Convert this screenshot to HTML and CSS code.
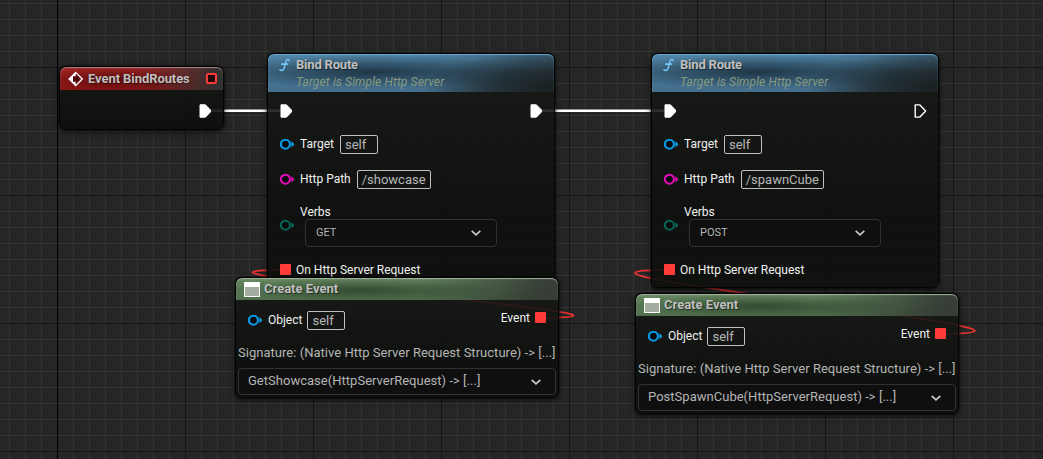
FILE: index.html
```
<!DOCTYPE html>
<html lang="en">
<head>
<meta charset="utf-8">
<title>Blueprint Graph</title>
<link rel="stylesheet" href="styles.css">
</head>
<body>
<svg class="defs" width="0" height="0" aria-hidden="true">
  <symbol id="exec" viewBox="0 0 13 14"><path d="M1 .8h5.4l5.1 5.3v1.8l-5.1 5.3H1z" fill="currentColor" stroke="currentColor" stroke-width="1" stroke-linejoin="round"/></symbol>
  <symbol id="exec-open" viewBox="0 0 13 14"><path d="M1.2.9h4.7L11.6 7l-5.7 6.1H1.2z" fill="none" stroke="currentColor" stroke-width="1.4" stroke-linejoin="round"/></symbol>
  <symbol id="pin" viewBox="0 0 15 12"><circle cx="5.4" cy="6.2" r="4.5" fill="#080b0c" stroke="currentColor" stroke-width="2.1"/><path d="M11.3 3 14.5 6.2l-3.2 3.2z" fill="currentColor"/></symbol>
  <symbol id="chevron" viewBox="0 0 12 8"><path d="M1.7 1.8 6 5.9l4.3-4.1" fill="none" stroke="currentColor" stroke-width="1.7"/></symbol>
  <symbol id="function" viewBox="0 0 12 14"><path d="M10.2 2.6C9.8 1.1 7.6 1 7 3.2L5 10.6C4.4 12.6 2 12.9 1 11.8M2.6 6.1h6.2" fill="none" stroke="currentColor" stroke-width="1.6" stroke-linecap="round"/></symbol>
  <symbol id="event" viewBox="0 0 16 16"><path d="M7.7 1.4 14.3 8l-6.6 6.6L1.1 8z" fill="none" stroke="#fff" stroke-width="1.3"/><path d="M7.7 1 .7 8l7 7v-4.2H5V5.2h2.7z" fill="#fff"/><path d="M5 5.8h3V3.8L12 8l-4 4.2v-2H5z" fill="#4d0b0b"/></symbol>
  <symbol id="window" viewBox="0 0 16 15"><rect width="16" height="15" fill="#fff"/><rect x="1" y="5" width="14" height="9" fill="#a3ada0"/></symbol>
</svg>

<main class="graph">
  <svg class="wires" width="1043" height="459">
    <path class="wire-exec" d="M209 110.8H281M540 110.8H665"/>
    <path class="wire-event" d="M541 317.8C718 317.8 108 270 285 270"/>
    <path class="wire-event" d="M941 333.8C1126 333.8 484 270 669 270"/>
  </svg>

  <section class="node node-entry">
    <header class="head head-red">
      <svg class="icon-event"><use href="#event"/></svg>
      <h2 class="title title-entry">Event BindRoutes</h2>
      <i class="delegate-open"></i>
    </header>
    <div class="entry-body"><svg class="exec"><use href="#exec"/></svg></div>
  </section>

  <section class="node node-bind bind-a">
    <header class="head head-blue">
      <svg class="icon-fn"><use href="#function"/></svg>
      <div><h2 class="title title-bind">Bind Route</h2><p class="subtitle">Target is Simple Http Server</p></div>
    </header>
    <div class="bind-body">
      <div class="row row-exec"><svg class="exec"><use href="#exec"/></svg><svg class="exec"><use href="#exec"/></svg></div>
      <div class="row"><svg class="pin blue"><use href="#pin"/></svg><span class="label">Target</span><span class="field self">self</span></div>
      <div class="row row-path"><svg class="pin pink"><use href="#pin"/></svg><span class="label">Http Path</span><span class="field">/showcase</span></div>
      <div class="row row-verbs">
        <svg class="pin teal"><use href="#pin"/></svg>
        <div class="verbs"><span class="label">Verbs</span><div class="select"><span>GET</span><svg class="chevron"><use href="#chevron"/></svg></div></div>
      </div>
      <div class="row row-delegate"><i class="delegate"></i><span class="label">On Http Server Request</span></div>
    </div>
  </section>

  <section class="node node-bind bind-b">
    <header class="head head-blue">
      <svg class="icon-fn"><use href="#function"/></svg>
      <div><h2 class="title title-bind">Bind Route</h2><p class="subtitle">Target is Simple Http Server</p></div>
    </header>
    <div class="bind-body">
      <div class="row row-exec"><svg class="exec"><use href="#exec"/></svg><svg class="exec"><use href="#exec-open"/></svg></div>
      <div class="row"><svg class="pin blue"><use href="#pin"/></svg><span class="label">Target</span><span class="field self">self</span></div>
      <div class="row row-path"><svg class="pin pink"><use href="#pin"/></svg><span class="label">Http Path</span><span class="field">/spawnCube</span></div>
      <div class="row row-verbs">
        <svg class="pin teal"><use href="#pin"/></svg>
        <div class="verbs"><span class="label">Verbs</span><div class="select"><span>POST</span><svg class="chevron"><use href="#chevron"/></svg></div></div>
      </div>
      <div class="row row-delegate"><i class="delegate"></i><span class="label">On Http Server Request</span></div>
    </div>
  </section>

  <section class="node node-create create-a">
    <header class="head head-green"><svg class="icon-window"><use href="#window"/></svg><h2 class="title">Create Event</h2></header>
    <div class="create-pins">
      <div class="row"><svg class="pin blue"><use href="#pin"/></svg><span class="label">Object</span><span class="field self">self</span></div>
      <div class="row row-out"><span class="label">Event</span><i class="delegate"></i></div>
    </div>
    <p class="signature">Signature: (Native Http Server Request Structure) -&gt; [...]</p>
    <div class="select select-fn"><span>GetShowcase(HttpServerRequest) -&gt; [...]</span><svg class="chevron"><use href="#chevron"/></svg></div>
  </section>

  <section class="node node-create create-b">
    <header class="head head-green"><svg class="icon-window"><use href="#window"/></svg><h2 class="title">Create Event</h2></header>
    <div class="create-pins">
      <div class="row"><svg class="pin blue"><use href="#pin"/></svg><span class="label">Object</span><span class="field self">self</span></div>
      <div class="row row-out"><span class="label">Event</span><i class="delegate"></i></div>
    </div>
    <p class="signature">Signature: (Native Http Server Request Structure) -&gt; [...]</p>
    <div class="select select-fn"><span>PostSpawnCube(HttpServerRequest) -&gt; [...]</span><svg class="chevron"><use href="#chevron"/></svg></div>
  </section>
</main>
</body>
</html>
```

FILE: styles.css
```
* { box-sizing: border-box; }
body { margin: 0; background: #262626; font-family: Roboto, "Liberation Sans", sans-serif; }
h2, p { margin: 0; }
svg { display: block; flex: none; }
.defs { position: absolute; }

/* Canvas grid: 16px cells, darker line every 8 cells, black origin axis */
.graph {
  position: relative;
  width: 1043px;
  height: 459px;
  overflow: hidden;
  background:
    linear-gradient(#000, #000) 57px 0 / 1px 100% no-repeat,
    linear-gradient(to right, #161616 1px, transparent 1px) 57px 0 / 128px 100%,
    linear-gradient(to bottom, #161616 1px, transparent 1px) 0 67px / 100% 128px,
    linear-gradient(to right, #343434 1px, transparent 1px) 9px 0 / 16px 100%,
    linear-gradient(to bottom, #343434 1px, transparent 1px) 0 3px / 100% 16px,
    #262626;
}
.wires { position: absolute; left: 0; top: 0; fill: none; }
.wire-exec { stroke: #fff; stroke-width: 2.5; }
.wire-event { stroke: #e83232; stroke-width: 1.8; }

.node {
  position: absolute;
  border: 1px solid #030403;
  border-radius: 7px;
  background: linear-gradient(rgba(22, 25, 22, .88), rgba(12, 15, 12, .9) 70%);
  background-clip: padding-box;
  box-shadow: 0 0 2px #000, 0 2px 6px rgba(0, 0, 0, .65);
}
.node-entry { left: 59px; top: 66px; width: 165px; height: 64px; }
.node-bind { top: 53px; width: 288px; height: 235px; }
.bind-a { left: 267px; }
.bind-b { left: 651px; }
.node-create { width: 324px; height: 121px; }
.create-a { left: 235px; top: 277px; }
.create-b { left: 635px; top: 293px; }

.head { display: flex; border-radius: 6px 6px 0 0; }
.head-red {
  height: 23px; align-items: center; padding: 0 6px 0 8px;
  background:
    radial-gradient(ellipse 75px 13px at 55px 12px, rgba(50, 5, 5, .6), transparent),
    linear-gradient(to right, transparent 45%, #303030 98%),
    linear-gradient(#a82626, #8b1313);
  box-shadow: inset 0 1px 1px #a58484;
}
.head-blue {
  height: 38px; padding: 3px 0 0 11px;
  background:
    radial-gradient(ellipse 160px 17px at 105px 18px, rgba(16, 32, 42, .75), rgba(16, 32, 42, .4) 50%, transparent),
    radial-gradient(ellipse 130px 36px at 100% 85%, rgba(25, 29, 29, .96), rgba(25, 29, 29, .7) 45%, transparent),
    linear-gradient(to right, transparent 50%, rgba(35, 52, 62, .45) 100%),
    linear-gradient(#5084a6, #446f8d);
  box-shadow: inset 0 1px 1px #69a9d2;
}
.head-green {
  height: 22px; align-items: center; padding-left: 8px;
  background:
    radial-gradient(ellipse 140px 12px at 125px 12px, rgba(25, 42, 25, .6), transparent),
    linear-gradient(to right, transparent 55%, rgba(46, 48, 46, .8) 95%),
    linear-gradient(rgba(112, 148, 106, .9), rgba(86, 121, 82, .9));
  box-shadow: inset 0 1px 1px #a3b3a0;
}
.title { font-size: 13px; font-weight: 700; line-height: 16px; color: #bfbfbf; text-shadow: 1px 1px 1px rgba(0, 0, 0, .5); white-space: nowrap; }
.title-entry { letter-spacing: -.08px; }
.title-bind { letter-spacing: -.2px; }
.subtitle { font-size: 12px; font-style: italic; line-height: 16px; margin-top: 1px; letter-spacing: .14px; color: #899a80; white-space: nowrap; }
.icon-event { width: 16px; height: 16px; margin-right: 4px; }
.icon-fn { width: 12px; height: 14px; margin: 1px 5px 0 0; color: #74c2f4; }
.icon-window { width: 16px; height: 15px; margin-right: 4px; }

.entry-body { display: flex; justify-content: flex-end; padding: 14px 11px 0 0; }
.exec { width: 13px; height: 14px; color: #fff; }
.pin { width: 15px; height: 12px; }
.blue { color: #069be6; }
.pink { color: #e60cb8; }
.teal { color: #066455; }
.delegate { flex: none; width: 11px; height: 11px; border-radius: 1px; background: #ff3b3b; }
.delegate-open { flex: none; width: 11px; height: 11px; margin-left: auto; border: 2px solid #ff3b3b; border-radius: 2px; background: #260505; }

.row { display: flex; align-items: center; height: 28px; }
.label { font-size: 12px; line-height: 16px; color: #f0f0f0; white-space: nowrap; }
.field {
  height: 19px; margin-left: 6px; padding: 0 4px;
  border: 1px solid #c0c0c0; border-radius: 2px;
  font-size: 13px; line-height: 17px; color: #b8b8b8; white-space: nowrap;
}
.self { width: 38px; }
.bind-body { padding: 0 11px 0 12px; }
.bind-body .pin { margin-right: 5px; }
.row-exec { height: 38px; justify-content: space-between; }
.row-path { margin-top: 7px; }
.row-verbs { height: 54px; align-items: flex-start; }
.row-verbs .pin { margin-top: 26px; }
.verbs { display: flex; flex-direction: column; padding-top: 11px; }
.verbs .select { margin-top: -1px; }
.select {
  display: flex; align-items: center; justify-content: space-between;
  width: 192px; height: 28px; margin-left: 5px; padding: 0 14px 0 10px;
  border: 1px solid #313131; border-radius: 4px; background: #0f0f0f;
  font-size: 11px; color: #b4b4b4; white-space: nowrap;
}
.verbs .select span { padding-bottom: 1px; }
.chevron { width: 12px; height: 8px; color: #c8c8c8; }
.row-delegate { margin-top: 8px; gap: 5px; }
.row-delegate .label { padding-top: 1px; }

.create-pins { display: flex; justify-content: space-between; height: 44px; padding: 6px 12px 0; }
.create-pins .pin { margin-right: 5px; }
.create-pins .field { margin-left: 5px; }
.row-out { height: 23px; gap: 5px; }
.signature { padding-left: 2px; font-size: 13px; line-height: 18px; letter-spacing: .025px; color: #b4b4b4; white-space: nowrap; }
.select-fn { width: 318px; height: 27px; margin: 6px 0 0 2px; padding: 0 13px 0 9px; font-size: 13px; letter-spacing: .02px; }
.select-fn span { padding-bottom: 2px; }
```
